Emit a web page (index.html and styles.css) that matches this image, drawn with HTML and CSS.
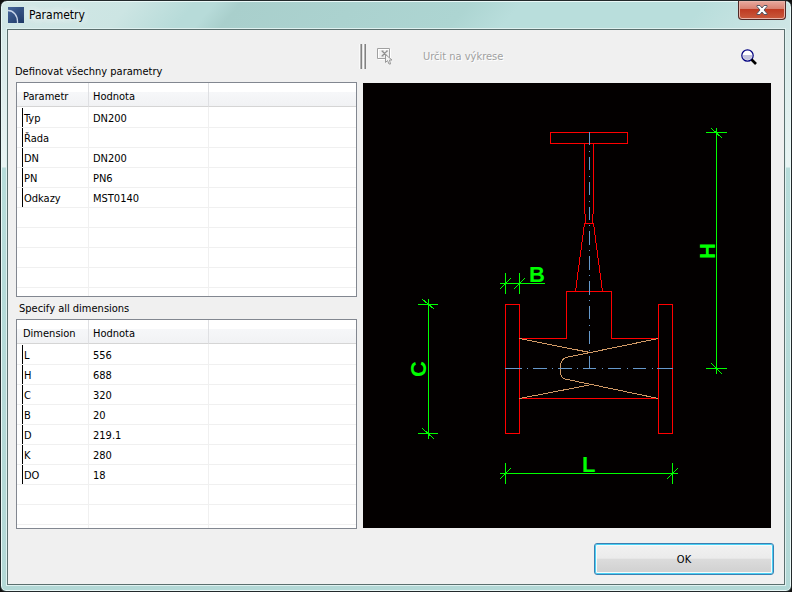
FILE: index.html
```html
<!DOCTYPE html>
<html lang="cs">
<head>
<meta charset="utf-8">
<title>Parametry</title>
<link rel="stylesheet" href="styles.css">
</head>
<body>
<div class="window">
  <header class="titlebar">
    <svg class="app-icon" viewBox="0 0 16 16" aria-hidden="true">
      <defs><linearGradient id="app" x1="0" y1="0" x2="1" y2="1"><stop offset="0" stop-color="#47679c"/><stop offset="1" stop-color="#1d3764"/></linearGradient></defs>
      <rect width="16" height="16" fill="url(#app)"/>
      <path d="M0 3.5C5 3.5 10 8 9.5 16" fill="none" stroke="#c9d6ea" stroke-width="1.3"/>
    </svg>
    <h1 class="title">Parametry</h1>
    <button class="close" type="button" aria-label="Zavřít">
      <svg viewBox="0 0 12 10" aria-hidden="true"><path d="M1 .5h3L6 3 8 .5h3v1L8 5l3 3.500v1H8L6 7 4 9.500H1v-1L4 5 1 1.500z" fill="#fff" stroke="#525866"/></svg>
    </button>
  </header>
  <main class="client">
    <div class="columns">
      <div class="lists">
        <h2 class="label" id="params">Definovat všechny parametry</h2>
        <div class="list list-params">
          <table aria-labelledby="params">
            <colgroup><col class="c-name"><col class="c-value"><col></colgroup>
            <thead><tr><th>Parametr</th><th>Hodnota</th><th></th></tr></thead>
            <tbody>
              <tr><td><span>Typ</span></td><td>DN200</td><td></td></tr>
              <tr><td><span>Řada</span></td><td></td><td></td></tr>
              <tr><td><span>DN</span></td><td>DN200</td><td></td></tr>
              <tr><td><span>PN</span></td><td>PN6</td><td></td></tr>
              <tr><td><span>Odkazy</span></td><td>MST0140</td><td></td></tr>
              <tr><td></td><td></td><td></td></tr>
              <tr><td></td><td></td><td></td></tr>
              <tr><td></td><td></td><td></td></tr>
              <tr><td></td><td></td><td></td></tr>
              <tr><td></td><td></td><td></td></tr>
            </tbody>
          </table>
        </div>
        <h2 class="label label-dims" id="dims">Specify all dimensions</h2>
        <div class="list list-dims">
          <table aria-labelledby="dims">
            <colgroup><col class="c-name"><col class="c-value"><col></colgroup>
            <thead><tr><th>Dimension</th><th>Hodnota</th><th></th></tr></thead>
            <tbody>
              <tr><td><span>L</span></td><td>556</td><td></td></tr>
              <tr><td><span>H</span></td><td>688</td><td></td></tr>
              <tr><td><span>C</span></td><td>320</td><td></td></tr>
              <tr><td><span>B</span></td><td>20</td><td></td></tr>
              <tr><td><span>D</span></td><td>219.1</td><td></td></tr>
              <tr><td><span>K</span></td><td>280</td><td></td></tr>
              <tr><td><span>DO</span></td><td>18</td><td></td></tr>
              <tr><td></td><td></td><td></td></tr>
              <tr><td></td><td></td><td></td></tr>
              <tr><td></td><td></td><td></td></tr>
            </tbody>
          </table>
        </div>
      </div>
      <div class="preview">
        <div class="toolbar">
          <i class="grip"></i>
          <button class="tool" type="button" disabled>
            <svg class="pick-icon" viewBox="0 0 18 18" aria-hidden="true">
              <path d="M1.500 1.500h12v10h-12z" fill="none" stroke="#fff"/>
              <path d="M.5.5h12v10H.5z" fill="none" stroke="#a0a0a0"/>
              <path d="M5 3l5 5M10 3L5 8M4.500 3h2M9 3h2M4.500 8h2" fill="none" stroke="#909090" stroke-width="1.200"/>
              <path d="M8.500 6.500v8l2-2 1.500 3.500h1.500l-1-4h2.500z" fill="#f4f4f4" stroke="#999"/>
            </svg>
            <span>Určit na výkrese</span>
          </button>
          <button class="tool zoom" type="button" aria-label="Zoom">
            <svg class="zoom-icon" viewBox="0 0 16 16" aria-hidden="true">
              <circle cx="6.500" cy="6.500" r="5.700" fill="#fff"/>
              <path d="M1.500 6h10c0 2-2 5-5 5s-5-3-5-5z" fill="#c4c4dc"/>
              <circle cx="6.500" cy="6.500" r="5.700" fill="none" stroke="#000080" stroke-width="1.200"/>
              <path d="M10.500 10.500l4.500 4.500" stroke="#000" stroke-width="2.600"/>
            </svg>
          </button>
        </div>
        <svg class="drawing" viewBox="363 83 408 445" role="img" aria-label="Výkres ventilu">
          <g class="outline">
            <path d="M550.500 132.500h77v11h-77z"/>
            <path d="M584.500 143v70.500l1 1v9M593.500 143v70.500l-1 1v9M584.500 223.500h9"/>
            <path d="M584.500 223.500l-9 68M593.500 223.500l9 68"/>
            <path d="M519.500 338.500h47v-47h45v47h47M519.500 398.500h139"/>
            <path d="M505.500 304.500h14v129h-14zM658.500 304.500h14v129h-14z"/>
          </g>
          <g class="seat">
            <path d="M519.500 338.500L590 352.500M658.500 338.500L566 357.500Q560.500 360 560.500 366.500V373Q561 377.500 565 379L658.500 398.500M519.500 398.500L592 384.500"/>
          </g>
          <g class="axis">
            <path d="M589.500 132V369M508.500 368.500H673"/>
            <path class="solid" d="M505 368.500h4M657 368.500h16"/>
          </g>
          <g class="dim">
            <path d="M428.500 299v140M418 304.500h20M418 433.500h20M422 299l12 10M422 428l12 11"/>
            <path d="M500 283.500h45M505.500 273v21M519.500 273v21M500 289l11-11M514 289l11-11"/>
            <path d="M500 473.500h178M505.500 463v21M672.500 463v21M500 479l11-11M667 479l11-11"/>
            <path d="M716.500 128v246M706 132.500h21M706 368.500h21M711 128l11 10M711 363l11 11"/>
          </g>
          <g class="dim-text">
            <text x="529" y="282">B</text>
            <text x="582" y="472">L</text>
            <text transform="translate(426 377) rotate(-90)">C</text>
            <text transform="translate(715 259) rotate(-90)">H</text>
          </g>
        </svg>
      </div>
    </div>
    <footer class="actions"><button class="ok" type="button">OK</button></footer>
  </main>
</div>
</body>
</html>
```
FILE: styles.css
```css
* { box-sizing: border-box; }
body {
  margin: 0;
  background: #111;
  color: #000;
  font: 11px/18px "DejaVu Sans Condensed", "DejaVu Sans", sans-serif;
}
button { font: inherit; color: inherit; }
h1, h2 { margin: 0; font-weight: normal; }

.window {
  display: flex;
  flex-direction: column;
  min-height: 100vh;
  padding: 0 5px 5px;
  border: 1px solid #22292b;
  border-radius: 7px 7px 6px 6px;
  box-shadow: inset 0 0 0 1px #e9f8f7;
  background:
    linear-gradient(130deg, #d3e8e7 0, #cce5e3 100px, #b7dbd9 150px, #b7dbd9 165px, #a9cfcc 185px, #add5d2 360px, #b9dedc 400px, #b9dedc 540px, #cfe6e5 100%) 0 0 / 100% 29px no-repeat,
    linear-gradient(#d2e6e5 0, #e9f4f3 166px, #b7dcda 167px, #b3d8d6 100%);
}
.titlebar {
  display: flex;
  align-items: flex-start;
  height: 27px;
  padding-left: 2px;
}
.app-icon { width: 16px; height: 16px; margin-top: 6px; }
.title {
  flex: 1;
  padding: 5px 0 0 5px;
  font-size: 12px;
  text-shadow: 0 0 8px #fff, 0 0 8px #fff;
}
.close {
  display: flex;
  align-items: center;
  justify-content: center;
  width: 48px;
  height: 19px;
  padding: 0 0 1px;
  border: 1px solid #4f2826;
  border-top: 0;
  border-radius: 0 0 4px 4px;
  box-shadow: inset 0 0 0 1px #e9b3a8;
  background: linear-gradient(#e8aa9f 0, #d8806f 45%, #bf3a22 46%, #c95a3d 100%);
}
.close svg { width: 12px; height: 10px; }

.client {
  flex: 1;
  display: flex;
  flex-direction: column;
  border: 1px solid #5b6f6e;
  outline: 1px solid #dff1f0;
  margin: 1px;
  background: #f0f0f0;
}
.columns {
  display: grid;
  grid-template-columns: minmax(0, 341fr) minmax(0, 408fr);
  gap: 6px;
  padding: 0 13px 0 8px;
}
.lists { padding-top: 32px; }
.label { font-size: 11px; line-height: 20px; margin-left: -1px; }
.label-dims { padding-top: 2px; margin-left: 3px; }
.list {
  overflow: hidden;
  border: 1px solid #828790;
  background: #fff;
}
.list-params { height: 215px; }
.list-dims { height: 210px; }

table { width: 100%; table-layout: fixed; border-spacing: 0; }
.c-name { width: 72px; }
.c-value { width: 120px; }
th {
  height: 24px;
  padding: 5px 0 0 4px;
  border-right: 1px solid #dfe0e3;
  border-bottom: 1px solid #d5d5d5;
  background: linear-gradient(#fff 40%, #f6f7f9 41%, #f1f2f4);
  font-weight: normal;
  line-height: 18px;
  text-align: left;
}
th:first-child { padding-left: 6px; }
td {
  height: 20px;
  padding: 2px 0 0 4px;
  border-right: 1px solid #f0f0f0;
  border-bottom: 1px solid #f0f0f0;
  line-height: 17px;
}
td:first-child { padding: 0 0 0 5px; }
tbody tr:first-child td { height: 21px; padding-top: 3px; }
tbody tr:first-child td:first-child { padding-top: 1px; }
th:last-child, td:last-child { border-right: 0; }
td span { display: block; padding: 2px 0 0 1px; border-left: 1px solid #000; }

.toolbar {
  display: flex;
  align-items: center;
  height: 53px;
  margin-left: -4px;
}
.grip {
  width: 7px;
  height: 25px;
  background: linear-gradient(90deg, #fafafa 1px, #b4b4b4 1px 2px, #828282 2px 3px, #e4e4e4 3px 4px, #fafafa 4px 5px, #b4b4b4 5px 6px, #828282 6px);
}
.tool {
  display: flex;
  align-items: center;
  gap: 28px;
  padding: 0;
  border: 0;
  background: none;
}
.tool:disabled { margin-left: 11px; color: #a0a0a0; text-shadow: 1px 1px #fff; }
.pick-icon { width: 18px; height: 18px; }
.zoom { margin: 0 14px 0 auto; }
.zoom-icon { width: 16px; height: 16px; }

.drawing {
  display: block;
  width: 100%;
  background: #030000;
  shape-rendering: crispEdges;
  fill: none;
}
.outline { stroke: #f00; }
.seat { stroke: #d19a66; }
.axis { stroke: #6699cc; stroke-dasharray: 13.4 5.5 1 4.95; }
.axis .solid { stroke-dasharray: none; }
.dim { stroke: #0f0; }
.dim-text { fill: #0f0; font: bold 22px "Liberation Sans", Arial, sans-serif; }

.actions { display: flex; justify-content: flex-end; padding: 14px 10px 9px; }
.ok {
  width: 180px;
  height: 32px;
  padding: 2px 0 0;
  border: 1px solid #3c7fb1;
  border-radius: 3px;
  box-shadow: inset 0 0 0 1px #48d0f4, inset 0 0 0 2px #f6fbfc;
  background: linear-gradient(#f2f2f2 0, #ebebeb 48%, #dcdcdc 49%, #cfcfcf 100%);
}
```
